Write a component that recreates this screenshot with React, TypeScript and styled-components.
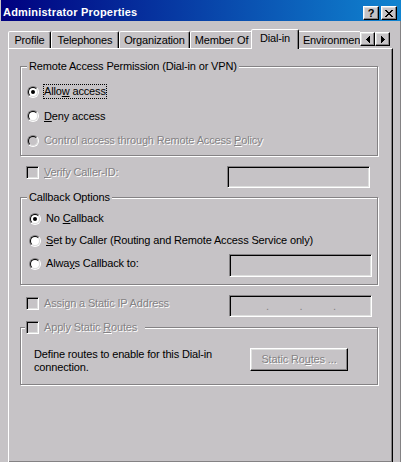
import React from 'react';
import styled, { createGlobalStyle } from 'styled-components';

const FACE = '#c6c3c6';
const SHADOW = '#848284';
const LIGHT = '#dedfde';
const HILITE = '#ffffff';
const DARK = '#000000';

const GlobalStyle = createGlobalStyle`
  html, body { margin: 0; padding: 0; background: ${FACE}; overflow: hidden; }
  body {
    font-family: "Liberation Sans", Arial, sans-serif;
    font-size: 11px;
    line-height: 13px;
    letter-spacing: -0.15px;
    color: #000;
  }
  *, *::before, *::after { box-sizing: border-box; }
`;

const Window = styled.div`
  width: 401px;
  height: 463px;
  display: flex;
  flex-direction: column;
  background: ${FACE};
  overflow: hidden;
`;

const TitleBar = styled.div`
  flex: none;
  height: 21px;
  margin-left: 1px;
  padding: 5px 4px 0 2px;
  display: flex;
  align-items: flex-start;
  background: linear-gradient(to right, #000080, #1084d0);
`;

const TitleText = styled.span`
  flex: 1;
  color: #fff;
  font-weight: bold;
  line-height: 14px;
  letter-spacing: 0.2px;
  white-space: nowrap;
`;

const CaptionButtons = styled.div`
  display: flex;
  gap: 2px;
  margin-top: 1px;
`;

const RaisedBox = styled.div`
  background: ${FACE};
  border: 1px solid;
  border-color: ${HILITE} ${DARK} ${DARK} ${HILITE};
  box-shadow: inset -1px -1px 0 ${SHADOW}, inset 1px 1px 0 ${LIGHT};
  display: flex;
  align-items: center;
  justify-content: center;
`;

const CaptionButton = styled(RaisedBox)`
  width: 16px;
  height: 14px;
`;

const HelpGlyph = styled.span`
  font-weight: bold;
  font-size: 11px;
  line-height: 11px;
  letter-spacing: 0;
  margin-top: 0px;
`;

const Client = styled.div`
  flex: 1;
  min-height: 0;
  display: flex;
  flex-direction: column;
  padding: 8px 0 0 8px;
  border-right: 1px solid ${SHADOW};
`;

const TabRow = styled.div`
  position: relative;
  z-index: 1;
  flex: none;
  width: 385px;
  height: 20px;
`;

const TabStrip = styled.div`
  display: flex;
  align-items: flex-end;
  width: 352px;
  height: 20px;
  overflow: hidden;
`;

const Tab = styled.div<{ $w: number; $active?: boolean }>`
  flex: none;
  position: relative;
  z-index: ${(p) => (p.$active ? 1 : 0)};
  width: ${(p) => p.$w}px;
  height: ${(p) => (p.$active ? 20 : 17)}px;
  margin: ${(p) => (p.$active ? '0 -2px' : '0 0 1px')};
  padding-top: 2px;
  background: ${FACE};
  border: 1px solid;
  border-bottom: none;
  border-color: ${HILITE} ${DARK} transparent ${HILITE};
  border-radius: 2px 2px 0 0;
  box-shadow: inset -1px 0 0 ${SHADOW};
  text-align: center;
  white-space: nowrap;
`;

const Scroller = styled.div`
  position: absolute;
  left: 352px;
  top: 3px;
  display: flex;
`;

const ScrollButton = styled(RaisedBox)`
  width: 15px;
  height: 14px;
`;

const Panel = styled.div`
  flex: 1;
  width: 385px;
  margin-top: -1px;
  border: 1px solid;
  border-color: ${HILITE} ${DARK} ${DARK} ${HILITE};
  box-shadow: inset -1px -1px 0 ${SHADOW};
  padding: 11px 14px 0 11px;
  display: flex;
  flex-direction: column;
`;

const Group = styled.fieldset<{ $mt?: number }>`
  margin: ${(p) => p.$mt ?? 0}px 0 0 0;
  padding: 0;
  min-inline-size: 0;
  width: 358px;
  border: 1px solid ${SHADOW};
  box-shadow: inset 1px 1px 0 ${HILITE}, 1px 1px 0 ${HILITE};
`;

const Legend = styled.legend<{ $ml: number; $pad: string }>`
  margin-left: ${(p) => p.$ml}px;
  padding: ${(p) => p.$pad};
  line-height: 13px;
  background: ${FACE};
  white-space: nowrap;
`;

const LegendRow = styled.span`
  display: inline-flex;
  align-items: center;
  gap: 5px;
  vertical-align: top;
  height: 13px;
`;

const GroupBody = styled.div<{ $pad: string; $gap?: number }>`
  display: flex;
  flex-direction: column;
  gap: ${(p) => p.$gap ?? 0}px;
  padding: ${(p) => p.$pad};
`;

const Option = styled.div<{ $mt?: number }>`
  display: flex;
  align-items: center;
  gap: 5px;
  height: 13px;
  margin-top: ${(p) => p.$mt ?? 0}px;
`;

const Label = styled.span<{ $disabled?: boolean; $focus?: boolean }>`
  white-space: nowrap;
  color: ${(p) => (p.$disabled ? SHADOW : '#000')};
  text-shadow: ${(p) => (p.$disabled ? `1px 1px 0 ${HILITE}` : 'none')};
  outline: ${(p) => (p.$focus ? '1px dotted #000' : 'none')};
`;

const U = styled.span`
  text-decoration: underline;
`;

const RadioOuter = styled.span`
  flex: none;
  width: 12px;
  height: 12px;
  border-radius: 50%;
  border: 1px solid;
  border-color: ${SHADOW} ${HILITE} ${HILITE} ${SHADOW};
  display: flex;
`;

const RadioInner = styled.span<{ $disabled?: boolean }>`
  flex: 1;
  border-radius: 50%;
  border: 1px solid;
  border-color: ${DARK} ${LIGHT} ${LIGHT} ${DARK};
  background: ${(p) => (p.$disabled ? FACE : '#fff')};
  display: flex;
  align-items: center;
  justify-content: center;
`;

const RadioDot = styled.span`
  width: 4px;
  height: 4px;
  border-radius: 50%;
  background: #000;
`;

const CheckBox = styled.span`
  flex: none;
  width: 13px;
  height: 13px;
  border: 1px solid;
  border-color: ${SHADOW} ${HILITE} ${HILITE} ${SHADOW};
  box-shadow: inset 1px 1px 0 ${DARK}, inset -1px -1px 0 ${LIGHT};
  background: ${FACE};
`;

const FieldRow = styled.div<{ $mt: number; $ml: number; $mr: number }>`
  display: flex;
  align-items: flex-start;
  margin: ${(p) => `${p.$mt}px ${p.$mr}px 0 ${p.$ml}px`};
`;

const Edit = styled.div<{ $h: number }>`
  flex: none;
  margin-left: auto;
  width: 143px;
  height: ${(p) => p.$h}px;
  border: 1px solid;
  border-color: ${SHADOW} ${HILITE} ${HILITE} ${SHADOW};
  box-shadow: inset 1px 1px 0 ${DARK}, inset -1px -1px 0 ${LIGHT};
  background: ${FACE};
`;

const IpEdit = styled(Edit)`
  display: flex;
  align-items: center;
  padding-left: 36px;
  gap: 30.5px;
`;

const IpDot = styled.span`
  width: 3px;
  text-align: center;
  color: ${SHADOW};
  letter-spacing: 0;
  line-height: 13px;
  margin-top: 1px;
`;

const RouteRow = styled.div`
  display: flex;
  align-items: flex-start;
  padding: 14px 0 10px 13px;
`;

const Description = styled.p`
  margin: 0;
  width: 200px;
`;

const PushButton = styled.button`
  flex: none;
  width: 98px;
  height: 23px;
  margin: 0 0 0 16px;
  padding: 0;
  font: inherit;
  letter-spacing: inherit;
  background: ${FACE};
  border: 1px solid;
  border-color: ${HILITE} ${DARK} ${DARK} ${HILITE};
  box-shadow: inset -1px -1px 0 ${SHADOW}, inset 1px 1px 0 ${LIGHT};
  color: ${SHADOW};
  text-shadow: 1px 1px 0 ${HILITE};
`;

const CLOSE_PATH =
  'M0 0h2v1H0z M6 0h2v1H6z M1 1h2v1H1z M5 1h2v1H5z M2 2h4v1H2z M3 3h2v1H3z M2 4h4v1H2z M1 5h2v1H1z M5 5h2v1H5z M0 6h2v1H0z M6 6h2v1H6z';
const LEFT_PATH = 'M0 3h1v1H0z M1 2h1v3H1z M2 1h1v5H2z M3 0h1v7H3z';
const RIGHT_PATH = 'M0 0h1v7H0z M1 1h1v5H1z M2 2h1v3H2z M3 3h1v1H3z';

function PixelIcon({ d, w, h }: { d: string; w: number; h: number }) {
  return (
    <svg width={w} height={h} viewBox={`0 0 ${w} ${h}`} shapeRendering="crispEdges">
      <path d={d} fill="#000" />
    </svg>
  );
}

function Radio({ checked, disabled }: { checked?: boolean; disabled?: boolean }) {
  return (
    <RadioOuter>
      <RadioInner $disabled={disabled}>{checked && <RadioDot />}</RadioInner>
    </RadioOuter>
  );
}

const tabs = [
  { label: 'Profile', w: 43 },
  { label: 'Telephones', w: 68 },
  { label: 'Organization', w: 71 },
  { label: 'Member Of', w: 63 },
  { label: 'Dial-in', w: 48, active: true },
  { label: 'Environment', w: 72 },
];

export default function App() {
  return (
    <>
      <GlobalStyle />
      <Window>
        <TitleBar>
          <TitleText>Administrator Properties</TitleText>
          <CaptionButtons>
            <CaptionButton aria-label="Help">
              <HelpGlyph>?</HelpGlyph>
            </CaptionButton>
            <CaptionButton aria-label="Close">
              <PixelIcon d={CLOSE_PATH} w={8} h={7} />
            </CaptionButton>
          </CaptionButtons>
        </TitleBar>
        <Client>
          <TabRow>
            <TabStrip>
              {tabs.map((t) => (
                <Tab key={t.label} $w={t.w} $active={t.active}>
                  {t.label}
                </Tab>
              ))}
            </TabStrip>
            <Scroller>
              <ScrollButton>
                <PixelIcon d={LEFT_PATH} w={4} h={7} />
              </ScrollButton>
              <ScrollButton>
                <PixelIcon d={RIGHT_PATH} w={4} h={7} />
              </ScrollButton>
            </Scroller>
          </TabRow>
          <Panel>
            <Group>
              <Legend $ml={6} $pad="0 2px">
                Remote Access Permission (Dial-in or VPN)
              </Legend>
              <GroupBody $pad="12px 0 8px 6px" $gap={11.5}>
                <Option>
                  <Radio checked />
                  <Label $focus>
                    Allo<U>w</U> access
                  </Label>
                </Option>
                <Option>
                  <Radio />
                  <Label>
                    <U>D</U>eny access
                  </Label>
                </Option>
                <Option>
                  <Radio disabled />
                  <Label $disabled>
                    Control access through Remote Access <U>P</U>olicy
                  </Label>
                </Option>
              </GroupBody>
            </Group>

            <FieldRow $mt={10} $ml={6} $mr={8}>
              <Option>
                <CheckBox />
                <Label $disabled>
                  <U>V</U>erify Caller-ID:
                </Label>
              </Option>
              <Edit $h={22} />
            </FieldRow>

            <Group $mt={3}>
              <Legend $ml={6} $pad="0 2px">
                Callback Options
              </Legend>
              <GroupBody $pad="0 5px 7px 8px">
                <Option $mt={8}>
                  <Radio checked />
                  <Label>
                    No <U>C</U>allback
                  </Label>
                </Option>
                <Option $mt={9}>
                  <Radio />
                  <Label>
                    <U>S</U>et by Caller (Routing and Remote Access Service only)
                  </Label>
                </Option>
                <FieldRow $mt={7} $ml={0} $mr={0}>
                  <Option $mt={3}>
                    <Radio />
                    <Label>
                      Alwa<U>y</U>s Callback to:
                    </Label>
                  </Option>
                  <Edit $h={23} />
                </FieldRow>
              </GroupBody>
            </Group>

            <FieldRow $mt={10} $ml={6} $mr={6}>
              <Option $mt={2}>
                <CheckBox />
                <Label $disabled>Assign a Static IP Address</Label>
              </Option>
              <IpEdit $h={22}>
                <IpDot>.</IpDot>
                <IpDot>.</IpDot>
                <IpDot>.</IpDot>
              </IpEdit>
            </FieldRow>

            <Group $mt={4}>
              <Legend $ml={4} $pad="0 8px 0 1px">
                <LegendRow>
                  <CheckBox />
                  <Label $disabled>
                    Apply Static <U>R</U>outes
                  </Label>
                </LegendRow>
              </Legend>
              <RouteRow>
                <Description>Define routes to enable for this Dial-in connection.</Description>
                <PushButton disabled>
                  Static Ro<U>u</U>tes ...
                </PushButton>
              </RouteRow>
            </Group>
          </Panel>
        </Client>
      </Window>
    </>
  );
}
